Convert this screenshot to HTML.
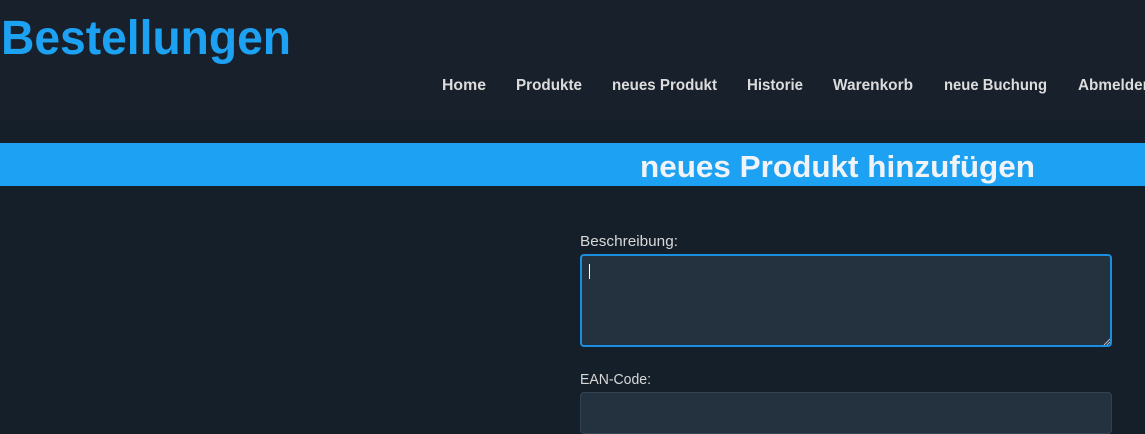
<!DOCTYPE html>
<html><head><meta charset="utf-8"><style>
html,body{margin:0;padding:0;width:1145px;height:416px;overflow:hidden;background:#151f2a;font-family:"Liberation Sans",sans-serif}
.hdr{position:absolute;left:0;top:0;width:1145px;height:121px;background:#18202b}
.bar{position:absolute;left:0;top:143px;width:1145px;height:43px;background:#1da1f2}
svg{position:absolute;left:0;top:0}
.ta{position:absolute;left:580px;top:254px;width:528px;height:89px;background:#243240;border:2px solid #1a8fe0;border-radius:4px}
.caret{position:absolute;left:7px;top:8px;width:1px;height:15px;background:#fff}
.in{position:absolute;left:580px;top:392px;width:530px;height:40px;background:#243240;border:1px solid #334253;border-radius:4px}
</style></head><body>
<div class="hdr"></div>
<div class="bar"></div>
<div class="ta"><div class="caret"></div></div>
<div class="in"></div>
<svg width="1145" height="416" font-family="Liberation Sans, sans-serif">
<text x="1" y="54" font-size="48" font-weight="bold" fill="#1da1f2" textLength="290" lengthAdjust="spacingAndGlyphs">Bestellungen</text>
<g font-size="16" font-weight="bold" fill="#dcdcdc">
<text x="442" y="90" textLength="44" lengthAdjust="spacingAndGlyphs">Home</text>
<text x="516" y="90" textLength="66" lengthAdjust="spacingAndGlyphs">Produkte</text>
<text x="612" y="90" textLength="105" lengthAdjust="spacingAndGlyphs">neues Produkt</text>
<text x="747" y="90" textLength="56" lengthAdjust="spacingAndGlyphs">Historie</text>
<text x="833" y="90" textLength="80" lengthAdjust="spacingAndGlyphs">Warenkorb</text>
<text x="944" y="90" textLength="103" lengthAdjust="spacingAndGlyphs">neue Buchung</text>
<text x="1078" y="90" textLength="74" lengthAdjust="spacingAndGlyphs">Abmelden</text>
</g>
<text x="640" y="177" font-size="31" font-weight="bold" fill="#f0f4f8" textLength="395" lengthAdjust="spacingAndGlyphs">neues Produkt hinzufügen</text>
<g font-size="15" fill="#d8d8d8">
<text x="580" y="246" textLength="98" lengthAdjust="spacingAndGlyphs">Beschreibung:</text>
<text x="580" y="384" textLength="71" lengthAdjust="spacingAndGlyphs">EAN-Code:</text>
</g>
<path d="M1104 345 L1110 339 M1107 345 L1110 342" stroke="#bbb" stroke-width="1"/>
</svg>
</body></html>
